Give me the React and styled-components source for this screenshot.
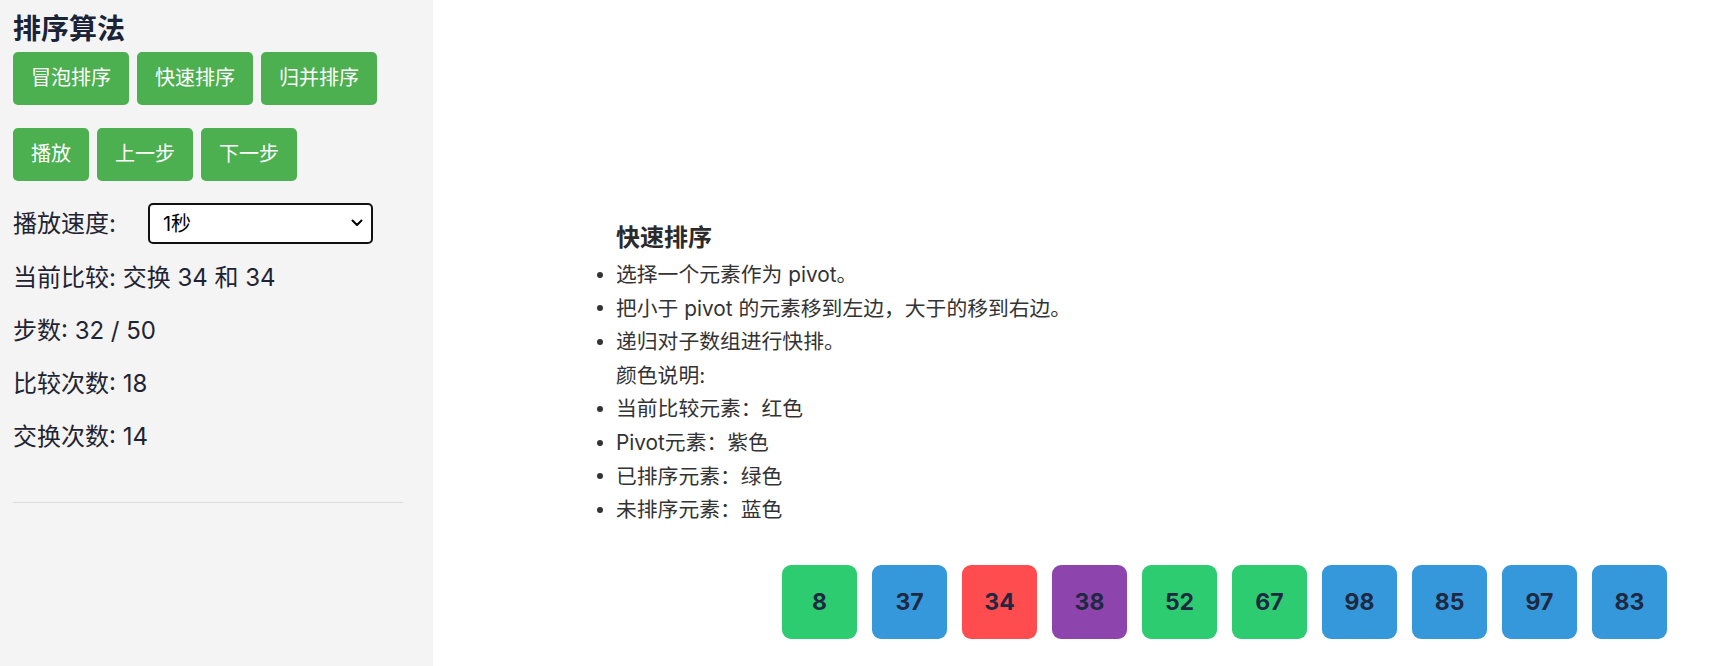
import styled, { createGlobalStyle } from "styled-components";

const GlobalStyle = createGlobalStyle`
  html, body {
    margin: 0;
    padding: 0;
    background: #fff;
  }
  body {
    font-family: Inter, "Noto Sans CJK SC", sans-serif;
  }
`;

const Page = styled.div`
  display: flex;
  min-height: 666px;
`;

const Sidebar = styled.aside`
  width: 433px;
  box-sizing: border-box;
  padding: 12px 30px 0 13px;
  background: #f4f4f4;
  flex-shrink: 0;
`;

const Title = styled.h2`
  margin: 0 0 6px;
  font-size: 28px;
  line-height: 34px;
  font-weight: 700;
  color: #1b2337;
`;

const ButtonRow = styled.div`
  display: flex;
  gap: 8px;
  margin-bottom: ${(p) => p.$mb || 0}px;
`;

const Button = styled.button`
  font-family: inherit;
  font-size: 20px;
  line-height: 25px;
  padding: 14px 18px;
  background: #4caf50;
  color: #fff;
  border: none;
  border-radius: 5px;
  cursor: pointer;
`;

const SpeedRow = styled.div`
  display: flex;
  align-items: center;
  margin-top: 22px;
`;

const Label = styled.label`
  font-size: 24px;
  line-height: 32px;
  color: #1f2433;
  margin-right: 32px;
`;

const SelectWrap = styled.div`
  position: relative;
  width: 225px;
  height: 41px;
`;

const Select = styled.select`
  appearance: none;
  width: 100%;
  height: 100%;
  box-sizing: border-box;
  border: 2px solid #111;
  border-radius: 5px;
  background: #fff;
  font-family: inherit;
  font-size: 20px;
  color: #000;
  padding: 0 13px;
`;

const Chevron = styled.svg`
  position: absolute;
  right: 10px;
  top: 16px;
  pointer-events: none;
`;

const Stats = styled.div`
  display: flex;
  flex-direction: column;
  gap: 21px;
  margin-top: 18px;
`;

const Stat = styled.p`
  margin: 0;
  font-size: 24px;
  line-height: 32px;
  color: #1f2433;
`;

const Divider = styled.hr`
  margin: 49px 0 0;
  border: none;
  border-top: 1px solid #dcdcdc;
`;

const Main = styled.main`
  flex: 1;
  background: #fff;
  padding-top: 221px;
`;

const Desc = styled.div`
  margin-left: 164px;
  color: #333;
`;

const DescTitle = styled.h3`
  margin: 0 0 3px 19px;
  font-size: 24px;
  line-height: 34px;
  font-weight: 700;
  color: #2b2b2b;
`;

const List = styled.ul`
  margin: 0;
  padding: 0;
  list-style: none;
`;

const Item = styled.li`
  display: flex;
  align-items: center;
  font-size: 20.8px;
  line-height: 33.6px;
  &::before {
    content: "";
    width: 6px;
    height: 6px;
    border-radius: 50%;
    background: ${(p) => (p.$plain ? "transparent" : "#333")};
    margin-right: 13px;
    flex-shrink: 0;
  }
`;

const Bars = styled.div`
  display: flex;
  gap: 15px;
  margin: 38px 0 0 349px;
`;

const Box = styled.div`
  width: 75px;
  height: 74px;
  border-radius: 9px;
  background: ${(p) => p.$color};
  display: flex;
  align-items: center;
  justify-content: center;
  font-size: 23px;
  font-weight: 700;
  color: #1e2840;
`;

const COLORS = {
  sorted: "#2ecc71",
  unsorted: "#3498db",
  compare: "#ff4d4f",
  pivot: "#8e44ad",
};

const data = [
  { v: 8, s: "sorted" },
  { v: 37, s: "unsorted" },
  { v: 34, s: "compare" },
  { v: 38, s: "pivot" },
  { v: 52, s: "sorted" },
  { v: 67, s: "sorted" },
  { v: 98, s: "unsorted" },
  { v: 85, s: "unsorted" },
  { v: 97, s: "unsorted" },
  { v: 83, s: "unsorted" },
];

const notes = [
  { t: "选择一个元素作为 pivot。" },
  { t: "把小于 pivot 的元素移到左边，大于的移到右边。" },
  { t: "递归对子数组进行快排。" },
  { t: "颜色说明:", plain: true },
  { t: "当前比较元素：红色" },
  { t: "Pivot元素：紫色" },
  { t: "已排序元素：绿色" },
  { t: "未排序元素：蓝色" },
];

export default function App() {
  return (
    <Page>
      <GlobalStyle />
      <Sidebar>
        <Title>排序算法</Title>
        <ButtonRow $mb={23}>
          <Button>冒泡排序</Button>
          <Button>快速排序</Button>
          <Button>归并排序</Button>
        </ButtonRow>
        <ButtonRow>
          <Button>播放</Button>
          <Button>上一步</Button>
          <Button>下一步</Button>
        </ButtonRow>
        <SpeedRow>
          <Label>播放速度:</Label>
          <SelectWrap>
            <Select defaultValue="1000">
              <option value="500">0.5秒</option>
              <option value="1000">1秒</option>
              <option value="2000">2秒</option>
            </Select>
            <Chevron width="12" height="8" viewBox="0 0 12 8">
              <path d="M1.5 1.5 L6 6 L10.5 1.5" fill="none" stroke="#000" strokeWidth="2" strokeLinecap="round" strokeLinejoin="round" />
            </Chevron>
          </SelectWrap>
        </SpeedRow>
        <Stats>
          <Stat>当前比较: 交换 34 和 34</Stat>
          <Stat>步数: 32 / 50</Stat>
          <Stat>比较次数: 18</Stat>
          <Stat>交换次数: 14</Stat>
        </Stats>
        <Divider />
      </Sidebar>
      <Main>
        <Desc>
          <DescTitle>快速排序</DescTitle>
          <List>
            {notes.map((n, i) => (
              <Item key={i} $plain={n.plain}>
                {n.t}
              </Item>
            ))}
          </List>
        </Desc>
        <Bars>
          {data.map((d, i) => (
            <Box key={i} $color={COLORS[d.s]}>
              {d.v}
            </Box>
          ))}
        </Bars>
      </Main>
    </Page>
  );
}
